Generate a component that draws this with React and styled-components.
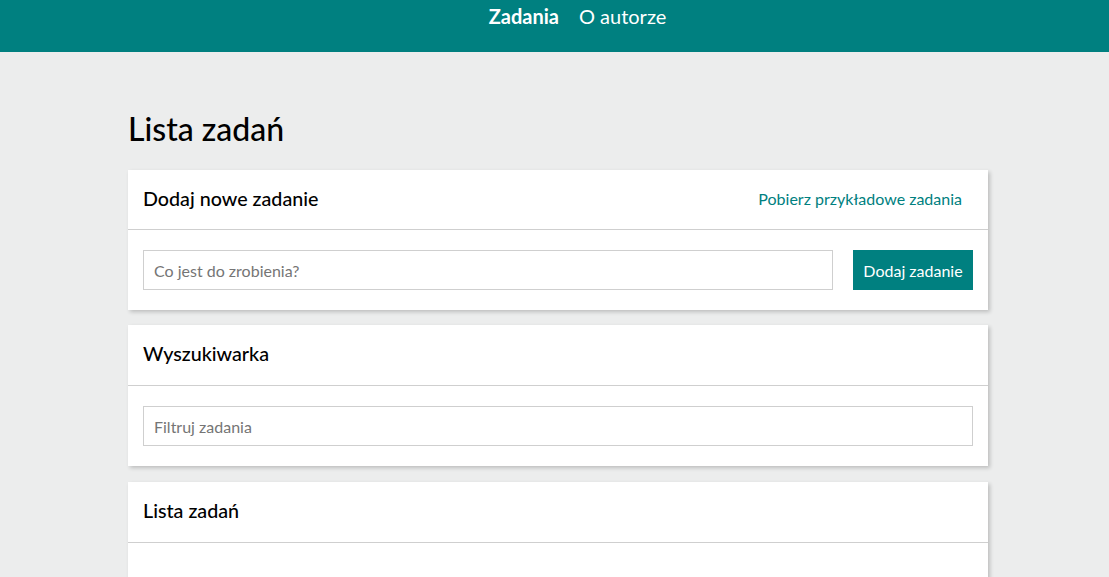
import React from 'react';
import styled, { createGlobalStyle } from 'styled-components';

const GlobalStyle = createGlobalStyle`
    body {
        margin: 0;
        background: #eceded;
        font-family: Lato, "Open Sans", sans-serif;
        color: #111;
    }
    * {
        box-sizing: border-box;
    }
`;

const TopBar = styled.header`
    height: 52px;
    background: #008080;
    display: flex;
    justify-content: center;
    padding-left: 46px;
`;

const NavLink = styled.a`
    color: #fff;
    font-size: 20px;
    line-height: 24px;
    padding-top: 4px;
    margin: 0 10px;
    font-weight: ${(props) => (props.active ? 700 : 400)};
    text-decoration: none;
    cursor: pointer;
`;

const Main = styled.main`
    width: 867px;
    margin: 0 auto;
    padding: 57px 0 0 7px;
`;

const PageTitle = styled.h1`
    margin: 0 0 21px;
    font-size: 32px;
    line-height: 40px;
    font-weight: 500;
    color: #000;
`;

const Card = styled.section`
    background: #fff;
    box-shadow: 2px 2px 4px rgba(0, 0, 0, 0.2);
    margin-bottom: ${(props) => props.gap || 15}px;
`;

const CardHeader = styled.div`
    height: ${(props) => props.h || 60}px;
    display: flex;
    align-items: center;
    justify-content: space-between;
    padding: 0 26px 3px 15px;
    border-bottom: 1px solid #cfcfcf;
`;

const CardTitle = styled.h2`
    margin: 0;
    font-size: 19.7px;
    font-weight: 500;
    color: #000;
`;

const LinkButton = styled.a`
    color: #008080;
    font-size: 16px;
    cursor: pointer;
`;

const CardBody = styled.div`
    display: flex;
    gap: 20px;
    padding: 20px 15px;
    min-height: ${(props) => props.minH || 0}px;
`;

const TextInput = styled.input`
    flex: 1;
    height: 40px;
    border: 1px solid #cfcfcf;
    padding: 0 10px;
    font-family: inherit;
    font-size: 16px;
    color: #333;
    outline: none;
    &::placeholder {
        color: #757575;
    }
`;

const PrimaryButton = styled.button`
    width: 120px;
    height: 40px;
    border: none;
    background: #008080;
    color: #fff;
    font-family: inherit;
    font-size: 16px;
    cursor: pointer;
`;

const App = () => {
    return (
        <>
            <GlobalStyle />
            <TopBar>
                <NavLink active>Zadania</NavLink>
                <NavLink>O autorze</NavLink>
            </TopBar>
            <Main>
                <PageTitle>Lista zadań</PageTitle>
                <Card>
                    <CardHeader>
                        <CardTitle>Dodaj nowe zadanie</CardTitle>
                        <LinkButton>Pobierz przykładowe zadania</LinkButton>
                    </CardHeader>
                    <CardBody>
                        <TextInput placeholder="Co jest do zrobienia?" />
                        <PrimaryButton>Dodaj zadanie</PrimaryButton>
                    </CardBody>
                </Card>
                <Card gap={16}>
                    <CardHeader h={61}>
                        <CardTitle>Wyszukiwarka</CardTitle>
                    </CardHeader>
                    <CardBody>
                        <TextInput placeholder="Filtruj zadania" />
                    </CardBody>
                </Card>
                <Card>
                    <CardHeader h={61}>
                        <CardTitle>Lista zadań</CardTitle>
                    </CardHeader>
                    <CardBody minH={80} />
                </Card>
            </Main>
        </>
    );
};

export default App;
